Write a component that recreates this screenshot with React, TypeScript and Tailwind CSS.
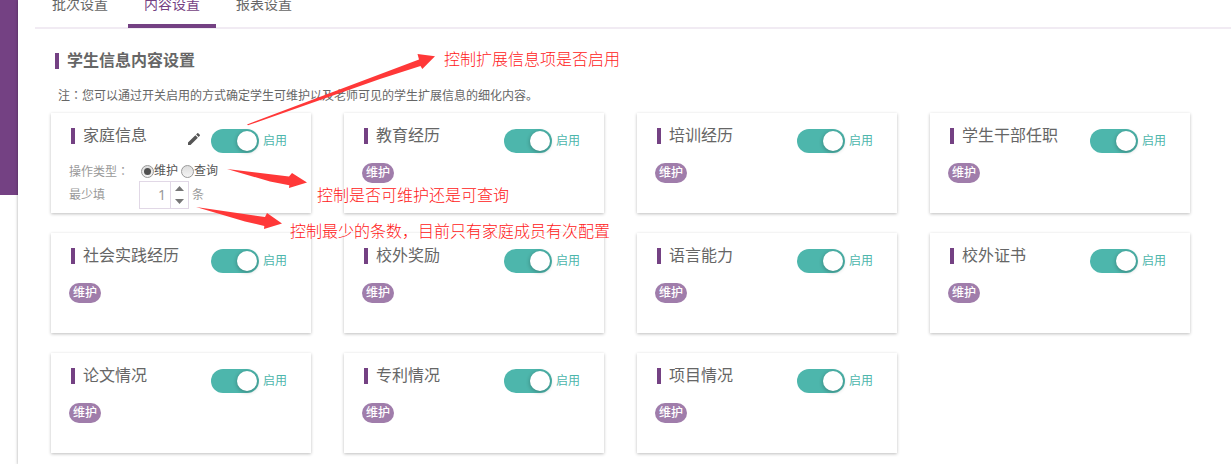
import { useState } from "react";
import { MdEdit } from "react-icons/md";

type Item = {
  id: string;
  title: string;
  configurable?: boolean;
};

const tabs = ["批次设置", "内容设置", "报表设置"];

const items: Item[] = [
  { id: "family", title: "家庭信息", configurable: true },
  { id: "education", title: "教育经历" },
  { id: "training", title: "培训经历" },
  { id: "cadre", title: "学生干部任职" },
  { id: "practice", title: "社会实践经历" },
  { id: "award", title: "校外奖励" },
  { id: "language", title: "语言能力" },
  { id: "certificate", title: "校外证书" },
  { id: "paper", title: "论文情况" },
  { id: "patent", title: "专利情况" },
  { id: "project", title: "项目情况" }
];

function Colon() {
  return <span className="font-['Noto_Sans_CJK_TC',sans-serif]">：</span>;
}

function Switch({ id, title }: { id: string; title: string }) {
  return (
    <div className="flex h-[26px] items-center gap-1 text-xs text-[#4db6ac]">
      <input
        id={id}
        type="checkbox"
        defaultChecked
        aria-label={`${title} 启用`}
        className="flex h-6 w-12 cursor-pointer appearance-none items-center rounded-full bg-[#bdbdbd] px-0.5 before:size-5 before:rounded-full before:bg-white before:shadow-[0_1px_4px_rgba(0,0,0,0.3)] checked:justify-end checked:bg-[#4db6ac]"
      />
      <label htmlFor={id}>启用</label>
    </div>
  );
}

function Radio({ label, value, checked, onChange }: {
  label: string;
  value: string;
  checked: boolean;
  onChange: (value: string) => void;
}) {
  return (
    <label className="flex items-center text-[#555]">
      <input
        type="radio"
        name="mode"
        value={value}
        checked={checked}
        onChange={() => onChange(value)}
        className="flex size-[13px] appearance-none items-center justify-center rounded-full border border-[#999] bg-linear-to-b from-[#ddd] to-[#f4f4f4] before:size-[7px] before:rounded-full checked:before:bg-[#505050]"
      />
      {label}
    </label>
  );
}

function FamilyConfig() {
  const [mode, setMode] = useState("maintain");
  const [count, setCount] = useState(1);

  return (
    <div className="pl-[18px] text-xs text-[#999]">
      <div className="flex h-[27px] items-center pt-[7px]">
        <span className="w-[72px]">操作类型<Colon /></span>
        <div className="flex gap-[3px]">
          <Radio label="维护" value="maintain" checked={mode === "maintain"} onChange={setMode} />
          <Radio label="查询" value="query" checked={mode === "query"} onChange={setMode} />
        </div>
      </div>
      <div className="flex items-center">
        <label htmlFor="min-count" className="w-[70px]">最少填</label>
        <div className="flex h-7 w-[50px] border border-[#e1d8e6]">
          <input
            id="min-count"
            value={count}
            onChange={(event) => setCount(Number(event.target.value) || 0)}
            className="w-[30px] pr-1 text-right font-['Noto_Sans',sans-serif] text-sm outline-none"
          />
          <div className="flex flex-1 flex-col border-l border-[#e1d8e6]">
            <button type="button" aria-label="增加" onClick={() => setCount(count + 1)} className="flex flex-1 items-center justify-center">
              <svg className="h-[5px] w-[9px]" viewBox="0 0 9 5" fill="#777" aria-hidden="true"><path d="M0 5 4.5 0 9 5z" /></svg>
            </button>
            <button type="button" aria-label="减少" onClick={() => setCount(Math.max(0, count - 1))} className="flex flex-1 items-center justify-center">
              <svg className="h-[5px] w-[9px]" viewBox="0 0 9 5" fill="#777" aria-hidden="true"><path d="M0 0 4.5 5 9 0z" /></svg>
            </button>
          </div>
        </div>
        <span className="pl-[3px]">条</span>
      </div>
    </div>
  );
}

function ItemCard({ item }: { item: Item }) {
  return (
    <section className="min-h-[100px] bg-white pt-[15px] shadow-[0_1px_3px_rgba(0,0,0,0.26)]">
      <div className="flex items-start pr-6 pl-5">
        <h2 className="flex-1 border-l-4 border-[#744183] pl-2 text-base leading-4 font-normal text-[#666]">{item.title}</h2>
        {item.configurable && (
          <button type="button" aria-label="编辑" className="mr-[9px] flex h-[22px] items-center text-[#555]">
            <MdEdit className="size-4" />
          </button>
        )}
        <Switch id={item.id} title={item.title} />
      </div>
      {item.configurable ? (
        <FamilyConfig />
      ) : (
        <div className="pt-[9px] pl-[18px]">
          <span className="flex h-5 w-8 items-center justify-center rounded-full bg-[#a07dab] text-xs font-medium text-white">维护</span>
        </div>
      )}
    </section>
  );
}

function Annotations() {
  return (
    <div className="pointer-events-none absolute inset-0 text-base leading-5 font-light whitespace-nowrap text-[#ff2020]">
      <svg className="absolute top-0 left-0" width="640" height="250" fill="#ff3838" aria-hidden="true">
        <path d="M247 124.500 419 59.500 417.500 54 435 56.300 422.300 69 420.500 66 380 79 248 125.300z" />
        <path d="M227 169 289 176.500 292 173 307 182.500 289 188 289.300 185.300 270 181.500z" />
        <path d="M196 207 265 217 267 213 282 223.500 264 229 264.300 226 245 221.500z" />
      </svg>
      <p className="absolute top-[50px] left-[444px]">控制扩展信息项是否启用</p>
      <p className="absolute top-[186px] left-[317px]">控制是否可维护还是可查询</p>
      <p className="absolute top-[222px] left-[290px]">控制最少的条数，目前只有家庭成员有次配置</p>
    </div>
  );
}

export default function App() {
  const [activeTab, setActiveTab] = useState("内容设置");

  return (
    <div className="relative flex min-h-screen bg-white font-['Liberation_Sans','Noto_Sans_CJK_SC',sans-serif] text-[#666]">
      <aside className="w-[18px] shrink-0">
        <div className="h-[195px] bg-[#744183]" />
      </aside>
      <main className="min-w-0 flex-1 bg-white shadow-[0_0_3px_rgba(0,0,0,0.35)]">
        <nav className="ml-[17px] flex h-[29px] gap-1 border-b-2 border-[#f1ebf3] pl-px">
          {tabs.map((tab) => (
            <button
              key={tab}
              type="button"
              onClick={() => setActiveTab(tab)}
              className={
                tab === activeTab
                  ? "flex h-7 w-[88px] justify-center border-b-4 border-[#744183] text-sm leading-2 text-[#744183]"
                  : "flex h-7 w-[88px] justify-center text-sm leading-2"
              }
            >
              {tab}
            </button>
          ))}
        </nav>

        <div className="pt-6 pr-[41px] pb-3 pl-[33px]">
          <h1 className="ml-1 border-l-4 border-[#744183] pl-2 text-base leading-4 font-bold">学生信息内容设置</h1>
          <p className="mt-[18px] pl-[7px] text-xs leading-4">
            注<Colon />您可以通过开关启用的方式确定学生可维护以及老师可见的学生扩展信息的细化内容。
          </p>
          <div className="mt-[9px] grid grid-cols-4 gap-x-[33px] gap-y-5">
            {items.map((item) => (
              <ItemCard key={item.id} item={item} />
            ))}
          </div>
        </div>
      </main>
      <Annotations />
    </div>
  );
}
